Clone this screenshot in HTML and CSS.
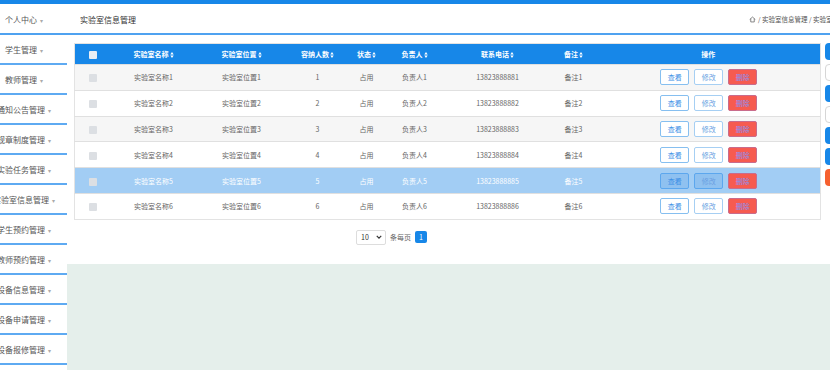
FILE: index.html
```html
<!DOCTYPE html>
<html lang="zh-CN">
<head>
    <meta charset="UTF-8">
    <title>实验室信息管理</title>
    <link rel="stylesheet" href="styles.css">
</head>
<body>

    <div class="topbar"></div>

    <!-- Header -->
    <div class="header">
        <div class="user"><span>个人中心<i class="caret">▾</i></span></div>
        <div class="title">实验室信息管理</div>
        <div class="crumb">
            <svg class="home" viewBox="0 0 10 10" width="7" height="7"><path d="M1 5 L5 1.5 L9 5 M2.5 4 V8.5 H7.5 V4" fill="none" stroke="#666" stroke-width="1.1"/></svg>
            / 实验室信息管理 / 实验室信息管理
        </div>
    </div>

    <div class="layout">
        <!-- Sidebar -->
        <div class="side">
            <div class="side-item"><span>学生管理<i class="caret">▾</i></span></div>
            <div class="side-item"><span>教师管理<i class="caret">▾</i></span></div>
            <div class="side-item"><span>通知公告管理<i class="caret">▾</i></span></div>
            <div class="side-item"><span>规章制度管理<i class="caret">▾</i></span></div>
            <div class="side-item"><span>实验任务管理<i class="caret">▾</i></span></div>
            <div class="side-item"><span>实验室信息管理<i class="caret">▾</i></span></div>
            <div class="side-item"><span>学生预约管理<i class="caret">▾</i></span></div>
            <div class="side-item"><span>教师预约管理<i class="caret">▾</i></span></div>
            <div class="side-item"><span>设备信息管理<i class="caret">▾</i></span></div>
            <div class="side-item"><span>设备申请管理<i class="caret">▾</i></span></div>
            <div class="side-item"><span>设备报修管理<i class="caret">▾</i></span></div>
        </div>

        <!-- Main content -->
        <div class="main">
            <div class="panel">
                <div class="table-box">
                    <table class="grid">
                        <colgroup>
                            <col style="width:36px"><col style="width:86px"><col style="width:90px">
                            <col style="width:62px"><col style="width:36px"><col style="width:60px">
                            <col style="width:106px"><col style="width:46px"><col style="width:224px">
                        </colgroup>
                        <thead>
                            <tr>
                                <th><span class="check head"></span></th>
                                <th>实验室名称<svg class="sort" viewBox="0 0 4 7"><path d="M0 3 L2 0 L4 3 Z M0 4 L2 7 L4 4 Z" fill="#fff"/></svg></th>
                                <th>实验室位置<svg class="sort" viewBox="0 0 4 7"><path d="M0 3 L2 0 L4 3 Z M0 4 L2 7 L4 4 Z" fill="#fff"/></svg></th>
                                <th>容纳人数<svg class="sort" viewBox="0 0 4 7"><path d="M0 3 L2 0 L4 3 Z M0 4 L2 7 L4 4 Z" fill="#fff"/></svg></th>
                                <th>状态<svg class="sort" viewBox="0 0 4 7"><path d="M0 3 L2 0 L4 3 Z M0 4 L2 7 L4 4 Z" fill="#fff"/></svg></th>
                                <th>负责人<svg class="sort" viewBox="0 0 4 7"><path d="M0 3 L2 0 L4 3 Z M0 4 L2 7 L4 4 Z" fill="#fff"/></svg></th>
                                <th>联系电话<svg class="sort" viewBox="0 0 4 7"><path d="M0 3 L2 0 L4 3 Z M0 4 L2 7 L4 4 Z" fill="#fff"/></svg></th>
                                <th>备注<svg class="sort" viewBox="0 0 4 7"><path d="M0 3 L2 0 L4 3 Z M0 4 L2 7 L4 4 Z" fill="#fff"/></svg></th>
                                <th>操作</th>
                            </tr>
                        </thead>
                        <tbody>
                            <tr class="odd">
                                <td><span class="check"></span></td>
                                <td>实验室名称1</td><td>实验室位置1</td><td>1</td><td>占用</td><td>负责人1</td><td>13823888881</td><td>备注1</td>
                                <td><div class="ops"><span class="btn">查看</span><span class="btn soft">修改</span><span class="btn del">删除</span></div></td>
                            </tr>
                            <tr>
                                <td><span class="check"></span></td>
                                <td>实验室名称2</td><td>实验室位置2</td><td>2</td><td>占用</td><td>负责人2</td><td>13823888882</td><td>备注2</td>
                                <td><div class="ops"><span class="btn">查看</span><span class="btn soft">修改</span><span class="btn del">删除</span></div></td>
                            </tr>
                            <tr class="odd">
                                <td><span class="check"></span></td>
                                <td>实验室名称3</td><td>实验室位置3</td><td>3</td><td>占用</td><td>负责人3</td><td>13823888883</td><td>备注3</td>
                                <td><div class="ops"><span class="btn">查看</span><span class="btn soft">修改</span><span class="btn del">删除</span></div></td>
                            </tr>
                            <tr>
                                <td><span class="check"></span></td>
                                <td>实验室名称4</td><td>实验室位置4</td><td>4</td><td>占用</td><td>负责人4</td><td>13823888884</td><td>备注4</td>
                                <td><div class="ops"><span class="btn">查看</span><span class="btn soft">修改</span><span class="btn del">删除</span></div></td>
                            </tr>
                            <tr class="active">
                                <td><span class="check"></span></td>
                                <td>实验室名称5</td><td>实验室位置5</td><td>5</td><td>占用</td><td>负责人5</td><td>13823888885</td><td>备注5</td>
                                <td><div class="ops"><span class="btn">查看</span><span class="btn soft">修改</span><span class="btn del">删除</span></div></td>
                            </tr>
                            <tr>
                                <td><span class="check"></span></td>
                                <td>实验室名称6</td><td>实验室位置6</td><td>6</td><td>占用</td><td>负责人6</td><td>13823888886</td><td>备注6</td>
                                <td><div class="ops"><span class="btn">查看</span><span class="btn soft">修改</span><span class="btn del">删除</span></div></td>
                            </tr>
                        </tbody>
                    </table>

                    <!-- Pagination -->
                    <div class="pager">
                        <div class="size-select">
                            <span>10</span>
                            <svg viewBox="0 0 8 5" width="6" height="4"><path d="M1 1 L4 4 L7 1" fill="none" stroke="#333" stroke-width="1.6"/></svg>
                        </div>
                        <span class="per">条每页</span>
                        <span class="page">1</span>
                    </div>
                </div>

                <!-- Right toolbar (cut off by the window) -->
                <div class="tools">
                    <span class="tool blue"></span>
                    <span class="tool plain"></span>
                    <span class="tool blue"></span>
                    <span class="tool plain"></span>
                    <span class="tool blue"></span>
                    <span class="tool blue"></span>
                    <span class="tool orange"></span>
                </div>
            </div>
            <div class="fill"></div>
        </div>
    </div>

</body>
</html>
```

FILE: styles.css
```css
/* General Reset */
* {
    margin: 0;
    padding: 0;
    box-sizing: border-box;
}

body {
    font-family: "Noto Sans CJK SC", "Noto Sans", sans-serif;
    color: #333;
    background: #fff;
    width: 830px;
    height: 370px;
    overflow: hidden;
}

i {
    font-style: normal;
}

/* Top bar + header */
.topbar {
    height: 4px;
    background: #1787e8;
}

.header {
    height: 31px;
    display: flex;
    align-items: center;
    border-bottom: 2px solid #4fa2f0;
    font-size: 8px;
    white-space: nowrap;
    padding-top: 1px;
}

.header .user {
    width: 67px;
    flex: none;
    display: flex;
    justify-content: center;
    padding-right: 19px;
    color: #555;
}

.caret {
    color: #aaa;
    font-size: 6px;
    margin-left: 3px;
}

.header .title {
    flex: none;
    width: 682px;
    padding-left: 13px;
    color: #333;
}

.header .crumb {
    flex: none;
    font-size: 6.5px;
    color: #555;
    display: flex;
    align-items: center;
    gap: 2px;
}

/* Layout */
.layout {
    display: flex;
    height: 335px;
}

.side {
    width: 67px;
    flex: none;
    background: #fff;
}

.side-item {
    height: 30px;
    display: flex;
    justify-content: center;
    align-items: center;
    padding-right: 19px;
    border-bottom: 2px solid #5eaaf2;
    font-size: 8px;
    color: #555;
    white-space: nowrap;
}

.side-item span {
    flex: none;
}

.main {
    flex: 1;
    display: flex;
    flex-direction: column;
}

.panel {
    height: 229px;
    background: #fff;
    display: flex;
    gap: 5px;
    padding: 8px 0 0 7px;
}

.fill {
    flex: 1;
    background: #e5efeb;
}

/* Table */
.table-box {
    width: 746px;
    flex: none;
}

.grid {
    width: 746px;
    table-layout: fixed;
    border-collapse: collapse;
    border: 1px solid #e3e3e3;
    font-size: 7px;
    color: #666;
    text-align: center;
}

.grid th {
    height: 21px;
    background: #1787e8;
    color: #fff;
    font-weight: bold;
    white-space: nowrap;
}

.grid td {
    height: 25.8px;
    border-top: 1px solid #e0e0e0;
    white-space: nowrap;
}

.grid tr.odd td {
    background: #f6f6f6;
}

.grid tr.active td {
    background: #a2cdf4;
    color: #fff;
}

.sort {
    width: 4px;
    height: 6px;
    margin-left: 1px;
    vertical-align: -1px;
}

.check {
    display: inline-block;
    width: 8px;
    height: 8px;
    border-radius: 1px;
    background: #dcdfe3;
    vertical-align: middle;
}

.check.head {
    background: #e9eef5;
}

.ops {
    display: flex;
    justify-content: center;
    gap: 5px;
    padding-left: 1px;
}

.btn {
    width: 29px;
    height: 16px;
    display: inline-flex;
    align-items: center;
    justify-content: center;
    border: 1px solid #86bff0;
    border-radius: 2px;
    background: #fff;
    color: #3a8ee6;
    font-size: 7px;
}

.btn.soft {
    border-color: #a6cff3;
    color: #6a9fe2;
}

.btn.del {
    background: #f65b50;
    border-color: #c96c8c;
    color: #8791f0;
}

.grid tr.active .btn {
    background: #8fc1f0;
    border-color: #5ca7ee;
}

.grid tr.active .btn.del {
    background: #f65b50;
    border-color: #c96c8c;
}

/* Pagination */
.pager {
    display: flex;
    align-items: center;
    gap: 4px;
    margin-top: 10px;
    padding-left: 282px;
    font-size: 7px;
    color: #666;
}

.size-select {
    width: 30px;
    height: 15px;
    display: flex;
    align-items: center;
    justify-content: space-between;
    padding: 0 3px 0 4px;
    border: 1px solid #ddd;
    border-radius: 2px;
    color: #333;
}

.page {
    width: 12px;
    height: 12px;
    display: inline-flex;
    align-items: center;
    justify-content: center;
    border-radius: 2px;
    background: #1787e8;
    color: #fff;
}

/* Right toolbar */
.tools {
    display: flex;
    flex-direction: column;
    gap: 4px;
}

.tool {
    width: 30px;
    height: 17px;
    border-radius: 4px;
}

.tool.blue {
    background: #1787e8;
}

.tool.plain {
    background: #fff;
    border: 1px solid #d6d6d6;
}

.tool.orange {
    background: #f6602f;
}
```
